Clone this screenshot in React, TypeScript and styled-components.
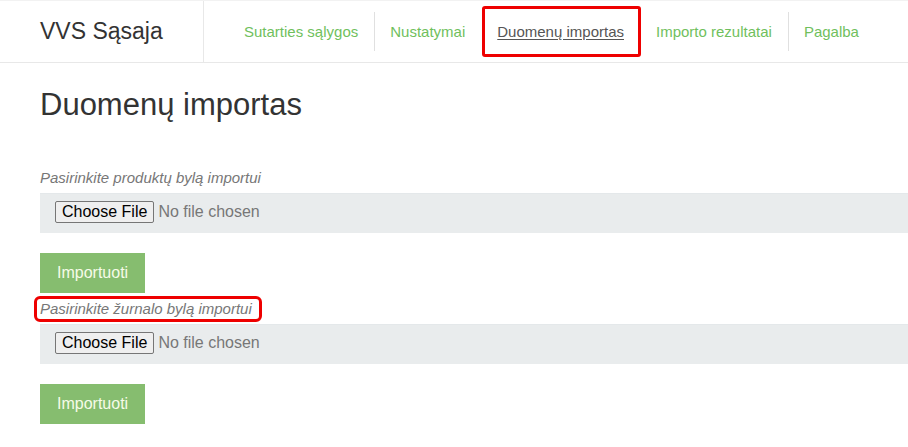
import React from "react";
import styled, { createGlobalStyle } from "styled-components";

const GlobalStyle = createGlobalStyle`
  html, body { margin: 0; padding: 0; background: #fff; overflow: hidden; }
  body { font-family: "Liberation Sans", Arial, sans-serif; color: #333; }
  * { box-sizing: border-box; }
`;

const Header = styled.header`
  display: flex;
  height: 63px;
  border-bottom: 1px solid #e8e8e8;
  border-top: 1px solid #f2f2f2;
  background: #fff;
`;

const Brand = styled.div`
  width: 204px;
  flex: none;
  display: flex;
  align-items: center;
  padding-left: 40px;
  border-right: 1px solid #e8e8e8;
  font-size: 23px;
  color: #333;
`;

const Nav = styled.ul`
  display: flex;
  align-items: stretch;
  list-style: none;
  margin: 0;
  padding: 0 0 0 24px;
`;

const NavItem = styled.li<{ $sep?: boolean }>`
  display: flex;
  align-items: center;
  position: relative;
  padding: 0 16px;
  font-size: 15px;
  &::before {
    content: "";
    display: ${(p) => (p.$sep ? "block" : "none")};
    position: absolute;
    left: 0;
    top: 11px;
    bottom: 11px;
    width: 1px;
    background: #e0e0e0;
  }
`;

const NavLink = styled.a<{ $active?: boolean }>`
  color: ${(p) => (p.$active ? "#555" : "#70bf5d")};
  text-decoration: ${(p) => (p.$active ? "underline" : "none")};
  text-underline-offset: 2px;
  cursor: pointer;
`;

const Highlight = styled.div`
  position: absolute;
  left: 1px;
  right: -1px;
  top: 5px;
  bottom: 5px;
  border: 3px solid #e00;
  border-radius: 3px;
  pointer-events: none;
`;

const Main = styled.main`
  padding: 25px 0 0 40px;
`;

const Title = styled.h1`
  margin: 0 0 46px;
  font-size: 31px;
  line-height: 34px;
  font-weight: 400;
  color: #333;
`;

const Group = styled.div`
  display: flex;
  flex-direction: column;
  align-items: flex-start;
`;

const Label = styled.label<{ $marked?: boolean }>`
  display: inline-block;
  font-size: 15px;
  line-height: 20px;
  font-style: italic;
  color: #777;
  margin: ${(p) => (p.$marked ? "6px 0 5px -3px" : "0 0 5px 0")};
  padding: ${(p) => (p.$marked ? "0 7px 0 3px" : "0")};
  outline: ${(p) => (p.$marked ? "3px solid #e00" : "none")};
  border-radius: 3px;
`;

const FileBox = styled.div`
  align-self: stretch;
  height: 40px;
  display: flex;
  align-items: center;
  padding: 0 15px 4px;
  background: #e9eced;
  border-top: 1px solid #e4e8ea;
`;

const FileInput = styled.input`
  font-family: "Liberation Sans", Arial, sans-serif;
  font-size: 16px;
  color: #777;
  &::file-selector-button {
    font: inherit;
    color: #000;
    background: #efefef;
    border: 1px solid #767676;
    border-radius: 2px;
    padding: 1px 6px;
    margin-right: 4px;
    height: 22px;
    line-height: 18px;
  }
`;

const ImportButton = styled.button`
  margin-top: 20px;
  height: 40px;
  padding: 0 17px;
  border: none;
  border-radius: 0;
  background: #86bd6f;
  color: #f6fbe8;
  font-family: "Liberation Sans", Arial, sans-serif;
  font-size: 16px;
  cursor: pointer;
`;

const navItems = [
  { label: "Sutarties sąlygos" },
  { label: "Nustatymai" },
  { label: "Duomenų importas", active: true },
  { label: "Importo rezultatai" },
  { label: "Pagalba" },
];

export default function App() {
  return (
    <>
      <GlobalStyle />
      <Header>
        <Brand>VVS Sąsaja</Brand>
        <Nav>
          {navItems.map((item, i) => (
            <NavItem
              key={item.label}
              $sep={i > 0 && !item.active && !navItems[i - 1].active}
            >
              <NavLink $active={item.active}>{item.label}</NavLink>
              {item.active && <Highlight />}
            </NavItem>
          ))}
        </Nav>
      </Header>
      <Main>
        <Title>Duomenų importas</Title>
        <Group>
          <Label>Pasirinkite produktų bylą importui</Label>
          <FileBox>
            <FileInput type="file" />
          </FileBox>
          <ImportButton>Importuoti</ImportButton>
        </Group>
        <Group>
          <Label $marked>Pasirinkite žurnalo bylą importui</Label>
          <FileBox>
            <FileInput type="file" />
          </FileBox>
          <ImportButton>Importuoti</ImportButton>
        </Group>
      </Main>
    </>
  );
}
